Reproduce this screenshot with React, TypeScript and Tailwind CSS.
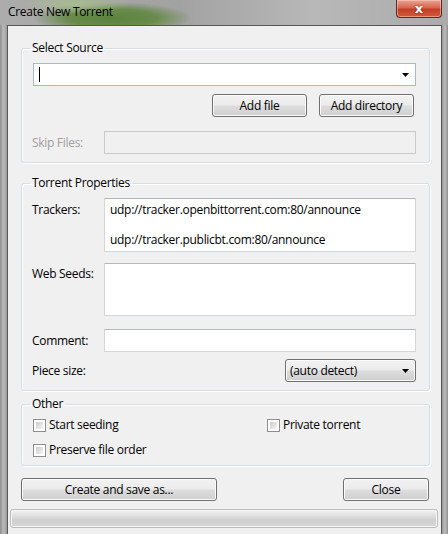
import React from "react";

const font = "font-['Open_Sans','Noto_Sans',sans-serif]";

const btn =
  "h-[23px] rounded-[3px] border border-[#707070] bg-[linear-gradient(#f2f2f2_0%,#ebebeb_48%,#dddddd_52%,#cfcfcf_100%)] shadow-[inset_0_0_0_1px_#fbfbfb] flex items-center justify-center text-black";

const box = "bg-white border border-[#d3d7dc] border-t-[#b5b9be]";

function Arrow() {
  return (
    <svg width="7" height="4" viewBox="0 0 7 4" className="shrink-0">
      <path d="M0 0h7L3.5 4z" fill="#000" />
    </svg>
  );
}

function Check({ label }: { label: string }) {
  return (
    <div className="flex items-center h-[16px] gap-[3px]">
      <div className="w-[13px] h-[13px] border border-[#8e8f8f] bg-white p-[2px]">
        <div className="w-full h-full bg-[linear-gradient(135deg,#cbcbcb,#f6f6f6)]" />
      </div>
      <span>{label}</span>
    </div>
  );
}

function Group({ title, className, children }: { title: string; className?: string; children: React.ReactNode }) {
  return (
    <fieldset
      className={`border border-[#d5dfe5] rounded-[3px] shadow-[inset_1px_1px_0_#fff,1px_1px_0_#fff] ${className ?? ""}`}
    >
      <legend className="ml-[8px] px-[2px] leading-[16px]">{title}</legend>
      <div className="pl-[10px] pr-[13px]">{children}</div>
    </fieldset>
  );
}

export default function App() {
  return (
    <div className={`w-[448px] h-[534px] overflow-hidden flex flex-col bg-[#a3a3a3] text-[12px] leading-[16px] tracking-[-0.3px] text-black ${font}`}>
      {/* title bar */}
      <div className="h-[25px] shrink-0 flex items-start justify-between bg-[radial-gradient(ellipse_55px_10px_at_75px_4px,#a7bd8e_0%,transparent_100%),radial-gradient(ellipse_80px_16px_at_112px_18px,#5c8240_0%,#698b4b_55%,transparent_100%),linear-gradient(90deg,#acacac,#a2a2a2_40%,#b8b8b8_70%,#ababab)]">
        <span className="ml-[8px] mt-[4px] text-[12px]">Create New Torrent</span>
        <div className="mr-[6px] w-[46px] h-[18px] rounded-b-[4px] border border-t-0 border-[#5e2a22] bg-[linear-gradient(#e9a795_0%,#d8654f_45%,#c23f26_55%,#d25a3c_100%)] shadow-[inset_0_0_0_1px_rgba(255,210,200,0.5)] flex items-center justify-center">
          <span className="text-white font-bold text-[13px] leading-none tracking-normal font-['DejaVu_Sans',sans-serif] [text-shadow:0_0_2px_#7a1b0b]">x</span>
        </div>
      </div>

      <div className="flex flex-1 min-h-0">
        <div className="w-[7px] bg-[linear-gradient(90deg,#8f8f8f,#b9b9b9_50%,#9a9a9a)]" />
        {/* client */}
        <div className="flex-1 bg-[#f0f0f0] border-t border-l border-[#575757] pl-[13px] pr-[11px] flex flex-col">
          <Group title="Select Source" className="mt-[14px] pb-[8px]">
            <div className="mt-[7px] ml-[1px] h-[23px] bg-white border border-[#a9b9cb] flex items-center pl-[5px] pr-[6px]">
              <div className="w-px h-[15px] bg-black" />
              <div className="flex-1" />
              <Arrow />
            </div>
            <div className="mt-[8px] flex justify-end gap-[12px] pr-[2px]">
              <div className={`${btn} w-[95px]`}>Add file</div>
              <div className={`${btn} w-[95px]`}>Add directory</div>
            </div>
            <div className="mt-[14px] flex items-center">
              <span className="w-[72px] text-[#a0a0a0]">Skip Files:</span>
              <div className="flex-1 h-[23px] border border-[#c8cacc] bg-[#f0f0f0]" />
            </div>
          </Group>

          <Group title="Torrent Properties" className="mt-[12px] pb-[8px]">
            <div className="mt-[7px] flex items-start">
              <span className="w-[72px] pt-[4px]">Trackers:</span>
              <div className={`${box} flex-1 h-[54px] pt-[3px] px-[5px] leading-[15px]`}>
                <div>udp://tracker.openbittorrent.com:80/announce</div>
                <div className="h-[15px]" />
                <div>udp://tracker.publicbt.com:80/announce</div>
              </div>
            </div>
            <div className="mt-[11px] flex items-start">
              <span className="w-[72px] pt-[3px]">Web Seeds:</span>
              <div className={`${box} flex-1 h-[53px]`} />
            </div>
            <div className="mt-[13px] flex items-center">
              <span className="w-[72px]">Comment:</span>
              <div className={`${box} flex-1 h-[23px]`} />
            </div>
            <div className="mt-[7px] flex items-center">
              <span className="flex-1">Piece size:</span>
              <div className={`${btn} w-[131px] !justify-between pl-[4px] pr-[6px]`}>
                <span>(auto detect)</span>
                <Arrow />
              </div>
            </div>
          </Group>

          <Group title="Other" className="mt-[5px] pb-[7px]">
            <div className="mt-[5px] ml-[1px] flex">
              <div className="w-[234px]">
                <Check label="Start seeding" />
              </div>
              <Check label="Private torrent" />
            </div>
            <div className="mt-[9px] ml-[1px]">
              <Check label="Preserve file order" />
            </div>
          </Group>

          <div className="mt-[12px] flex justify-between pr-[1px]">
            <div className={`${btn} w-[196px]`}>Create and save as...</div>
            <div className={`${btn} w-[86px]`}>Close</div>
          </div>

          <div className="mt-[8px] -ml-[11px] mr-[-8px] h-[19px] rounded-[3px] border border-[#bcbcbc] bg-[linear-gradient(#f3f3f3_0%,#e2e2e2_30%,#cfcfcf_60%,#d8d8d8_100%)] shadow-[inset_0_0_0_1px_#f7f7f7]" />
        </div>
        <div className="w-[7px] border-l border-[#575757] bg-[linear-gradient(90deg,#9a9a9a,#bcbcbc_50%,#8f8f8f)]" />
      </div>
    </div>
  );
}
